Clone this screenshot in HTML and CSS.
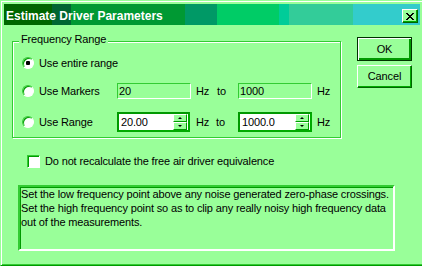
FILE: index.html
```html
<!DOCTYPE html>
<html>
<head>
<meta charset="utf-8">
<link rel="stylesheet" href="styles.css">
</head>
<body>
<div class="window">
  <div class="titlebar">
    <span class="title">Estimate Driver Parameters</span>
    <span class="close"><svg width="8" height="7" viewBox="0 0 8 7"><path d="M0 0h2v1H0zM6 0h2v1H6zM1 1h2v1H1zM5 1h2v1H5zM2 2h4v1H2zM3 3h2v1H3zM2 4h4v1H2zM1 5h2v1H1zM5 5h2v1H5zM0 6h2v1H0zM6 6h2v1H6z" fill="#000"/></svg></span>
  </div>
  <div class="content">
    <div class="top">
      <div class="group">
        <span class="legend">Frequency Range</span>
        <div class="row r1">
          <span class="opt"><span class="radio checked"></span><span class="lbl">Use entire range</span></span>
        </div>
        <div class="row r2">
          <span class="opt"><span class="radio"></span><span class="lbl">Use Markers</span></span>
          <span class="edit">20</span>
          <span class="unit">Hz</span>
          <span class="to">to</span>
          <span class="edit">1000</span>
          <span class="unit2">Hz</span>
        </div>
        <div class="row r3">
          <span class="opt"><span class="radio"></span><span class="lbl">Use Range</span></span>
          <span class="spin s1"><span class="spin-text">20.00</span><span class="spin-btns"><span class="sb"><span class="up"></span></span><span class="sb"><span class="down"></span></span></span></span>
          <span class="unit u3">Hz</span>
          <span class="to t3">to</span>
          <span class="spin s2"><span class="spin-text">1000.0</span><span class="spin-btns"><span class="sb"><span class="up"></span></span><span class="sb"><span class="down"></span></span></span></span>
          <span class="unit2">Hz</span>
        </div>
      </div>
      <div class="buttons">
        <div class="btn default">OK</div>
        <div class="btn cancel">Cancel</div>
      </div>
    </div>
    <div class="check-row"><span class="checkbox"></span><span class="lbl">Do not recalculate the free air driver equivalence</span></div>
    <div class="note">Set the low frequency point above any noise generated zero-phase crossings.<br>Set the high frequency point so as to clip any really noisy high frequency data<br>out of the measurements.</div>
  </div>
</div>
</body>
</html>
```
FILE: styles.css
```css
* { box-sizing: border-box; }
html, body { margin: 0; padding: 0; }
body {
  width: 422px;
  height: 266px;
  overflow: hidden;
  background: #99ff99;
  font-family: "Liberation Sans", Arial, sans-serif;
  font-size: 11px;
  letter-spacing: -0.15px;
  color: #000;
}
.window {
  width: 424px;
  height: 266px;
  background: #99ff99;
  border: 1px solid;
  border-color: #99ff99 #009900 #009900 #99ff99;
  box-shadow: inset 1px 1px 0 #fff, inset -1px -1px 0 #33cc33;
  padding: 3px;
}
.titlebar {
  height: 21px;
  display: flex;
  align-items: center;
  justify-content: space-between;
  padding: 3px 2px 0 2px;
  background: linear-gradient(to right,
    #006600 0 48px, #006633 48px 67px, #009933 67px 181px, #009966 181px 213px,
    #00cc66 213px 275px, #00cc99 275px 285px, #33cc99 285px 349px, #33cccc 349px);
}
.title {
  color: #fff;
  font-weight: bold;
  font-size: 12px;
  letter-spacing: 0;
  line-height: 14px;
}
.close {
  width: 16px;
  height: 14px;
  display: flex;
  align-items: center;
  justify-content: center;
  background: #99ff99;
  border: 1px solid;
  border-color: #fff #006600 #006600 #fff;
  box-shadow: inset -1px -1px 0 #00aa00;
}
.close svg { display: block; }

.top {
  display: flex;
  align-items: flex-start;
  padding-left: 8px;
}
.group {
  position: relative;
  margin-top: 16px;
  width: 329px;
  height: 97px;
  border: 1px solid #33cc33;
  box-shadow: inset 1px 1px 0 #fff, 1px 1px 0 #fff;
  padding: 13px 0 0 9px;
}
.legend {
  position: absolute;
  top: -9px;
  left: 6px;
  padding: 0 2px;
  line-height: 13px;
  background: #99ff99;
}
.row {
  display: flex;
  align-items: center;
}
.r1 { height: 16px; }
.r2 { height: 16px; margin-top: 12px; }
.r3 { height: 20px; margin-top: 13px; }
.opt {
  width: 95px;
  display: flex;
  align-items: center;
}
.lbl { margin-left: 5px; line-height: 13px; white-space: nowrap; }
.radio {
  position: relative;
  width: 12px;
  height: 12px;
  border-radius: 50%;
  background: #fff;
  border: 1px solid;
  border-color: #33cc33 #ffffff #ffffff #33cc33;
  box-shadow: inset 1px 1px 0 #009900;
  flex: none;
}
.radio.checked::after {
  content: "";
  position: absolute;
  left: 3px;
  top: 3px;
  width: 4px;
  height: 4px;
  border-radius: 1px;
  background: #000;
}
.edit {
  width: 74px;
  height: 16px;
  border: 1px solid;
  border-color: #33cc33 #fff #fff #33cc33;
  padding-left: 1px;
  line-height: 14px;
}
.unit { margin-left: 5px; width: 21px; }
.to { width: 21px; }
.unit2 { margin-left: 5px; }
.u3 { margin-left: 6px; width: 20px; }
.t3 { width: 22px; }
.spin {
  display: flex;
  height: 20px;
  background: #fff;
  border: 2px solid;
  border-color: #009900 #00aa00 #00aa00 #009900;
}
.s1 { width: 73px; }
.s2 { width: 74px; }
.spin-text {
  flex: 1;
  padding-left: 2px;
  line-height: 16px;
}
.spin-btns {
  width: 14px;
  display: flex;
  flex-direction: column;
  margin-right: 1px;
}
.sb {
  height: 8px;
  display: flex;
  align-items: center;
  justify-content: center;
  background: #99ff99;
  border: 1px solid;
  border-color: #fff #009900 #009900 #fff;
}
.up {
  width: 0; height: 0;
  border-left: 2px solid transparent;
  border-right: 2px solid transparent;
  border-bottom: 2px solid #000;
}
.down {
  width: 0; height: 0;
  border-left: 2px solid transparent;
  border-right: 2px solid transparent;
  border-top: 2px solid #000;
}

.buttons {
  margin-left: 16px;
  margin-top: 12px;
  display: flex;
  flex-direction: column;
}
.btn {
  width: 55px;
  height: 23px;
  display: flex;
  align-items: center;
  justify-content: center;
  background: #99ff99;
  border: 1px solid;
  border-color: #fff #006600 #006600 #fff;
  box-shadow: inset -1px -1px 0 #00aa00;
  line-height: 13px;
}
.btn.default {
  height: 24px;
  border: 1px solid #003300;
  box-shadow: inset 1px 1px 0 #fff, inset -2px -2px 0 #009900;
}
.btn.cancel { margin-top: 4px; }

.check-row {
  display: flex;
  align-items: center;
  margin: 17px 0 0 23px;
  height: 13px;
}
.checkbox {
  width: 13px;
  height: 13px;
  background: #fff;
  border: 1px solid;
  border-color: #33cc33 #fff #fff #33cc33;
  box-shadow: inset 1px 1px 0 #009900;
  flex: none;
}
.note {
  margin: 17px 0 0 14px;
  width: 377px;
  height: 66px;
  border: 2px solid;
  border-color: #33cc33 #fff #fff #33cc33;
  box-shadow: inset 1px 1px 0 #009900;
  padding: 0 0 0 1px;
  line-height: 14px;
  white-space: nowrap;
}
```
